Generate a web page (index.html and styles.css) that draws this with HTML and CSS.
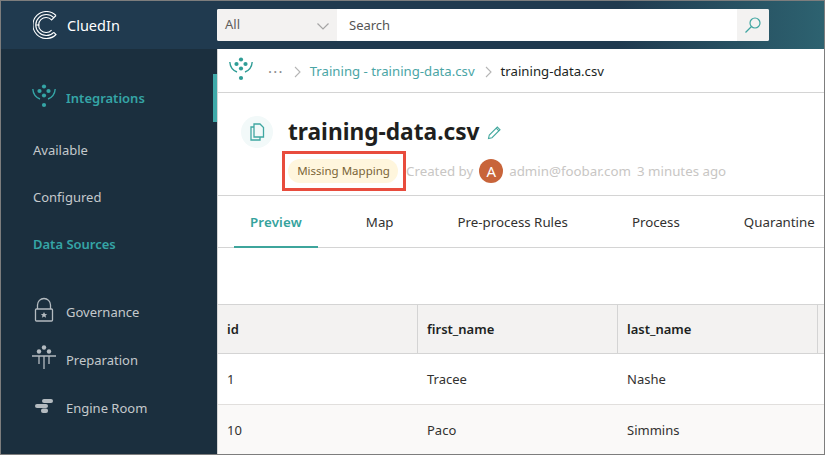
FILE: index.html
```html
<!DOCTYPE html>
<html lang="en">
  <head>
    <meta charset="UTF-8" />
    <title>CluedIn - training-data.csv</title>
    <link rel="stylesheet" href="styles.css">
  </head>
  <body>
    <div class="app">
      <header class="topbar">
        <div class="brand">
          <svg class="brand-logo" width="24" height="28" viewBox="0 0 24 28" fill="none" stroke="#fff" stroke-width="1.100">
            <path d="M23 4.500A13.500 13.500 0 1 0 23 23.500L20.800 21.300" />
            <path d="M20.800 6.700A10.500 10.500 0 1 0 20.800 21.300" />
            <path d="M23 4.500L18.600 8.900A7.500 7.500 0 1 0 18.600 19.100" />
            <path d="M3 14H6.500" />
          </svg>
          <span class="brand-name">CluedIn</span>
        </div>
        <div class="search">
          <div class="search-scope">
            <span>All</span>
            <svg width="12" height="7" viewBox="0 0 12 7" fill="none" stroke="#a5a5a5" stroke-width="1.200"><path d="M.5.500l5.500 5.500 5.500-5.500" /></svg>
          </div>
          <div class="search-input">Search</div>
          <div class="search-btn">
            <svg width="18" height="18" viewBox="0 0 18 18" fill="none" stroke="#3fa6a1" stroke-width="1.200"><circle cx="11" cy="7" r="5" /><path d="M7.500 10.500L1.500 16.500" /></svg>
          </div>
        </div>
      </header>

      <div class="layout">
        <nav class="sidebar">
          <div class="nav-item nav-item-active">
            <svg class="nav-icon" width="24" height="24" viewBox="0 0 24 24" fill="#35a5a6">
              <circle cx="12" cy="2.500" r="2.100" /><circle cx="7.500" cy="7" r="2.100" /><circle cx="16.500" cy="7" r="2.100" /><circle cx="12" cy="11.500" r="2.100" /><circle cx="12" cy="21" r="2.100" />
              <path d="M.8 5c.4 5 3.200 8.500 7.200 10M23.200 5c-.4 5-3.200 8.500-7.200 10" fill="none" stroke="#35a5a6" stroke-width="1.400" />
            </svg>
            <span>Integrations</span>
          </div>
          <div class="nav-sub">Available</div>
          <div class="nav-sub">Configured</div>
          <div class="nav-sub nav-sub-active">Data Sources</div>

          <div class="nav-group">
            <div class="nav-item">
              <svg class="nav-icon" width="24" height="26" viewBox="0 0 24 26" fill="none" stroke="#b4bbc0" stroke-width="1.300">
                <rect x="3.500" y="12" width="17" height="12" rx="1" />
                <path d="M5.500 12V8a6.500 6.500 0 0 1 13 0V12" />
                <path d="M12 15l1 2 2.200.2-1.700 1.400.6 2.200-2.100-1.200-2.100 1.200.6-2.200-1.700-1.400 2.200-.2z" fill="#b4bbc0" stroke="none" />
              </svg>
              <span>Governance</span>
            </div>
            <div class="nav-item">
              <svg class="nav-icon" width="24" height="26" viewBox="0 0 24 26" fill="#b4bbc0">
                <circle cx="12" cy="2.500" r="2.200" /><circle cx="7" cy="6.500" r="2.200" /><circle cx="17" cy="6.500" r="2.200" />
                <path d="M0 11H24M7 11v8M12 11v13M17 11v8" fill="none" stroke="#b4bbc0" stroke-width="1.300" />
              </svg>
              <span>Preparation</span>
            </div>
            <div class="nav-item">
              <svg class="nav-icon" width="24" height="14" viewBox="0 0 24 14" fill="#b4bbc0">
                <rect x="10" y="0" width="11" height="4" rx="2" /><rect x="3" y="5" width="13" height="4" rx="2" /><rect x="9" y="9.500" width="7" height="4.500" rx="2" />
              </svg>
              <span>Engine Room</span>
            </div>
          </div>
        </nav>

        <main class="content">
          <div class="crumbs">
            <svg class="crumb-logo" width="24" height="24" viewBox="0 0 24 24" fill="#2f9d96">
              <circle cx="12" cy="2.500" r="2.100" /><circle cx="7.500" cy="7" r="2.100" /><circle cx="16.500" cy="7" r="2.100" /><circle cx="12" cy="11.500" r="2.100" /><circle cx="12" cy="21" r="2.100" />
              <path d="M.8 5c.4 5 3.200 8.500 7.200 10M23.200 5c-.4 5-3.200 8.500-7.200 10" fill="none" stroke="#2f9d96" stroke-width="1.400" />
            </svg>
            <span class="crumb-more">···</span>
            <svg class="crumb-sep" width="8" height="12" viewBox="0 0 8 12" fill="none" stroke="#b5b5b5" stroke-width="1.100"><path d="M1 1l5 5-5 5" /></svg>
            <span class="crumb-link">Training - training-data.csv</span>
            <svg class="crumb-sep" width="8" height="12" viewBox="0 0 8 12" fill="none" stroke="#b5b5b5" stroke-width="1.100"><path d="M1 1l5 5-5 5" /></svg>
            <span class="crumb-current">training-data.csv</span>
          </div>

          <section class="title-block">
            <div class="file-icon">
              <svg width="16" height="18" viewBox="0 0 16 18" fill="none" stroke="#3fa6a1" stroke-width="1.300">
                <path d="M5 1h6l3.500 3.500V14H5z" /><path d="M5 4H2v13h9v-3" />
              </svg>
            </div>
            <div class="title-text">
              <h1 class="title">training-data.csv
                <svg width="15" height="15" viewBox="0 0 15 15" fill="none" stroke="#45a99f" stroke-width="1.100"><path d="M1.500 13.500l.8-3.500 8-8 2.700 2.700-8 8zM9.200 3.100l2.700 2.700" /></svg>
              </h1>
              <div class="meta">
                <span class="status">Missing Mapping</span>
                <span class="meta-text">Created by</span>
                <span class="avatar">A</span>
                <span class="meta-text">admin@foobar.com</span>
                <span class="meta-text">3 minutes ago</span>
              </div>
            </div>
            <div class="highlight"></div>
          </section>

          <div class="tabs">
            <div class="tab tab-active">Preview</div>
            <div class="tab">Map</div>
            <div class="tab">Pre-process Rules</div>
            <div class="tab">Process</div>
            <div class="tab">Quarantine</div>
          </div>

          <div class="grid-wrap">
            <div class="row row-head">
              <div class="cell">id</div>
              <div class="cell">first_name</div>
              <div class="cell">last_name</div>
              <div class="cell"></div>
            </div>
            <div class="row">
              <div class="cell">1</div>
              <div class="cell">Tracee</div>
              <div class="cell">Nashe</div>
              <div class="cell"></div>
            </div>
            <div class="row row-alt">
              <div class="cell">10</div>
              <div class="cell">Paco</div>
              <div class="cell">Simmins</div>
              <div class="cell"></div>
            </div>
          </div>
        </main>
      </div>
    </div>
  </body>
</html>
```

FILE: styles.css
```css
html,
body {
  margin: 0;
  padding: 0;
  height: 100%;
  overflow: hidden;
  font-family: "Noto Sans", "Open Sans", sans-serif;
  font-size: 13px;
  color: #323130;
}

.app {
  box-sizing: border-box;
  width: 825px;
  height: 455px;
  border: 1px solid #7d7d7d;
  display: flex;
  flex-direction: column;
  overflow: hidden;
}

.topbar {
  flex: 0 0 48px;
  display: flex;
  align-items: center;
  background: linear-gradient(90deg, #203a4f 0%, #203a4f 75%, #2d6270 100%);
}

.brand {
  width: 216px;
  display: flex;
  align-items: center;
  padding-left: 32px;
  box-sizing: border-box;
}

.brand-name {
  margin-left: 10px;
  color: #fff;
  font-size: 14.5px;
}

.search {
  width: 552px;
  height: 32px;
  display: flex;
  background: #fff;
  border-radius: 2px;
  overflow: hidden;
}

.search-scope {
  width: 120px;
  box-sizing: border-box;
  padding: 0 8px;
  background: #f3f2f1;
  display: flex;
  align-items: center;
  justify-content: space-between;
  color: #605e5c;
}

.search-scope span {
  margin-bottom: 3px;
}

.search-scope svg {
  margin-top: 2px;
}

.search-input {
  flex: 1;
  padding-left: 12px;
  line-height: 32px;
  color: #555;
}

.search-btn {
  width: 32px;
  background: #f3f2f1;
  display: flex;
  align-items: center;
  justify-content: center;
}

.layout {
  flex: 1;
  display: flex;
  min-height: 0;
}

.sidebar {
  width: 216px;
  flex: none;
  box-sizing: border-box;
  padding-top: 25px;
  background: #1b2f3e;
  color: #c4c9cc;
}

.nav-item {
  height: 48px;
  display: flex;
  align-items: center;
  padding-left: 31px;
  position: relative;
}

.nav-item span {
  position: absolute;
  left: 65px;
}

.nav-icon {
  margin-bottom: 5px;
}

.nav-item-active {
  color: #35a5a6;
  font-weight: 600;
  box-shadow: inset -4px 0 0 #3fa9a9;
}

.nav-sub {
  height: 47px;
  line-height: 56px;
  padding-left: 32px;
}

.nav-sub-active {
  color: #35a5a6;
  font-weight: 600;
}

.nav-group {
  margin-top: 25px;
}

.content {
  flex: 1;
  min-width: 0;
  border-left: 1px solid #d5d5d5;
  background: #fff;
}

.crumbs {
  height: 44px;
  box-sizing: border-box;
  border-bottom: 1px solid #d4d4d4;
  display: flex;
  align-items: center;
  padding-left: 11px;
  font-size: 13.2px;
}

.crumb-logo {
  margin-bottom: 3px;
}

.crumb-more {
  margin-left: 15px;
  color: #8a8a8a;
  font-size: 15px;
  letter-spacing: 1.2px;
}

.crumb-sep {
  margin: 2px 8px 0 10px;
}

.crumb-link {
  color: #4aa5a5;
}

.crumb-current {
  color: #201f1e;
}

.title-block {
  height: 102px;
  box-sizing: border-box;
  display: flex;
  padding: 23px 0 0 23px;
  position: relative;
}

.file-icon {
  width: 32px;
  height: 32px;
  border-radius: 50%;
  background: #f2f9f9;
  display: flex;
  align-items: center;
  justify-content: center;
}

.title-text {
  margin-left: 15px;
}

.title {
  margin: 0;
  font-size: 22.7px;
  line-height: 32px;
  font-weight: 700;
  color: #201f1e;
}

.title svg {
  margin-left: 2px;
}

.meta {
  display: flex;
  align-items: center;
  gap: 6px;
  margin-top: 11px;
  font-size: 13.3px;
}

.status {
  width: 110px;
  box-sizing: border-box;
  height: 24px;
  line-height: 24px;
  text-align: center;
  padding-left: 1px;
  margin-right: 2px;
  background: #fff6dd;
  border-radius: 12px;
  font-size: 11.5px;
  color: #7a6437;
}

.meta-text {
  color: #c8c6c4;
}

.avatar {
  width: 24px;
  height: 24px;
  border-radius: 50%;
  background: #c8643a;
  color: #fff;
  font-size: 15px;
  line-height: 24px;
  text-align: center;
}

.highlight {
  position: absolute;
  left: 64px;
  top: 58px;
  width: 118px;
  height: 34px;
  border: 3px solid #e84c3d;
}

.tabs {
  height: 53px;
  box-sizing: border-box;
  border-top: 1px solid #d4d4d4;
  border-bottom: 1px solid #d4d4d4;
  display: flex;
  font-size: 13.3px;
}

.tab {
  height: 52px;
  padding: 0 16px;
  margin: 0 16px;
  line-height: 52px;
  color: #323130;
  white-space: nowrap;
}

.tab-active {
  color: #35a39d;
  font-weight: 600;
  letter-spacing: 0.15px;
  box-shadow: inset 0 -2px 0 #3ea59c;
}

.grid-wrap {
  margin-top: 56px;
}

.row {
  display: grid;
  grid-template-columns: 200px 200px 200px 1fr;
  height: 51px;
  box-sizing: border-box;
  border-bottom: 1px solid #e1dfdd;
}

.row-head {
  height: 50px;
  background: #f3f2f1;
  border-top: 1px solid #d4d4d4;
  border-bottom: 1px solid #d4d4d4;
  font-weight: 600;
  color: #201f1e;
}

.row-alt {
  background: #faf9f8;
}

.cell {
  padding-left: 9px;
  display: flex;
  align-items: center;
  color: #323130;
}

.row-head .cell {
  border-right: 1px solid #d4d4d4;
  color: #201f1e;
}
```
